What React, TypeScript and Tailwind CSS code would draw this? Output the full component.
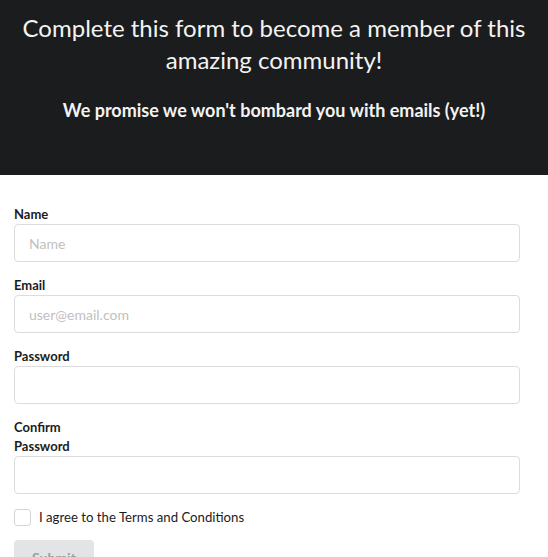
import React from "react";

const font = { fontFamily: "Lato, 'Helvetica Neue', Arial, sans-serif" };

function Field({ label, placeholder, type = "text" }: { label: React.ReactNode; placeholder?: string; type?: string }) {
  return (
    <div className="mb-[14px]">
      <label className="block text-[13px] font-bold leading-[19px] text-[#1b1c1d]">{label}</label>
      <input
        type={type}
        placeholder={placeholder}
        className="block w-full h-[38px] px-[14px] rounded-[4px] border border-[#dcdcdd] bg-white text-[14px] text-[#222] placeholder:text-[#bfbfbf] outline-none"
      />
    </div>
  );
}

export default function App() {
  return (
    <div className="w-[548px] min-h-[557px] bg-white" style={font}>
      <header className="h-[175px] bg-[#1b1c1d] text-center pt-[12px]">
        <h2 className="text-[24px] font-normal leading-[32px] text-[#f3f3f3] px-[14px]">
          Complete this form to become a member of this amazing community!
        </h2>
        <h3 className="mt-[22px] text-[18px] font-bold leading-[24px] text-[#f3f3f3]">
          We promise we won't bombard you with emails (yet!)
        </h3>
      </header>
      <form className="pl-[14px] pr-[28px] pt-[30px]">
        <Field label="Name" placeholder="Name" />
        <Field label="Email" placeholder="user@email.com" />
        <Field label="Password" type="password" />
        <Field label={<>Confirm<br />Password</>} type="password" />
        <label className="flex items-center gap-[8px] h-[17px] mt-[15px] text-[13.2px] leading-[17px] text-[#1b1c1d]">
          <span className="w-[17px] h-[17px] rounded-[3px] border border-[#d4d4d5] bg-white" />
          I agree to the Terms and Conditions
        </label>
        <button
          type="button"
          className="mt-[14px] h-[36px] px-[18px] rounded-[4px] bg-[#e3e4e5] text-[14px] leading-[14px] font-bold text-[#9c9c9c]"
        >
          Submit
        </button>
      </form>
    </div>
  );
}
